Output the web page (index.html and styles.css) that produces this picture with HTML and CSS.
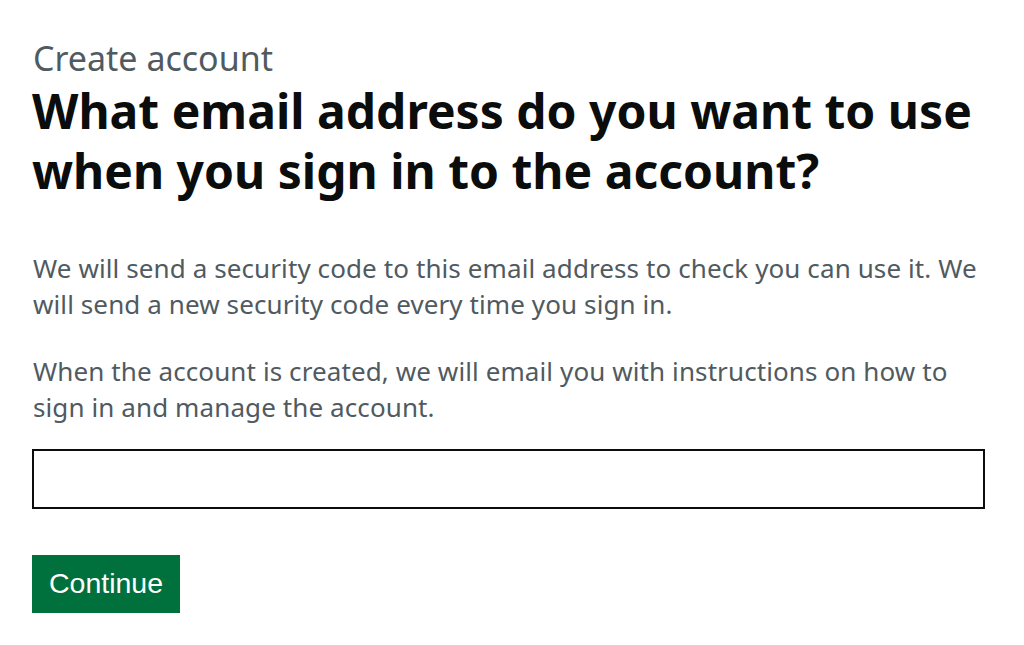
FILE: index.html
```html
<!DOCTYPE html>
<html lang="en">
<head>
<meta charset="utf-8">
<title>Create account</title>
<link rel="stylesheet" href="styles.css">
</head>
<body>
<main class="page">
  <span class="caption">Create account</span>
  <h1 class="heading">What email address do you want to use when you sign in to the account?</h1>
  <p class="body">We will send a security code to this email address to check you can use it. We will send a new security code every time you sign in.</p>
  <p class="body">When the account is created, we will email you with instructions on how to sign in and manage the account.</p>
  <input class="input" type="email" aria-label="Email address">
  <div class="actions">
    <button class="button" type="button">Continue</button>
  </div>
</main>
</body>
</html>
```

FILE: styles.css
```css
html, body {
  margin: 0;
  padding: 0;
  background: #ffffff;
}
.page {
  display: flex;
  flex-direction: column;
  align-items: flex-start;
  padding: 38px 39px 0 32px;
  font-family: "Noto Sans", "Liberation Sans", sans-serif;
  color: #0b0c0c;
}
.caption {
  display: block;
  font-size: 34px;
  line-height: 40px;
  color: #505a5f;
  padding-left: 1px;
}
.heading {
  margin: 3px 0 49px 0;
  font-size: 48px;
  line-height: 60px;
  font-weight: 700;
  letter-spacing: 0;
}
.body {
  margin: 0 0 31px 0;
  font-size: 26px;
  line-height: 36px;
  color: #505a5f;
  padding-left: 1px;
  letter-spacing: 0.1px;
}
.body + .body {
  margin-bottom: 24px;
}
.input {
  box-sizing: border-box;
  width: 100%;
  height: 60px;
  margin: 0;
  border: 2px solid #0b0c0c;
  border-radius: 0;
  padding: 5px;
  font-size: 24px;
  background: #fff;
}
.actions {
  margin-top: 46px;
}
.button {
  box-sizing: border-box;
  width: 148px;
  height: 58px;
  border: 0;
  border-radius: 0;
  background: #00703c;
  box-shadow: 0 3px 0 #002d18;
  color: #ffffff;
  font-family: "Liberation Sans", Arial, sans-serif;
  font-size: 28.5px;
  line-height: 32px;
  padding: 10px 0 13px;
  cursor: pointer;
}
```
